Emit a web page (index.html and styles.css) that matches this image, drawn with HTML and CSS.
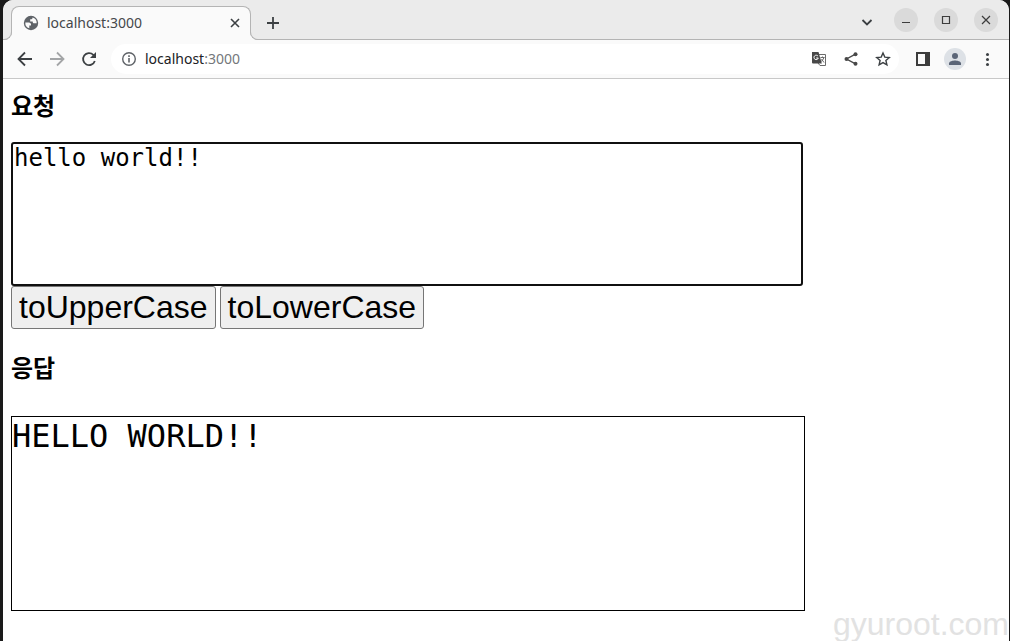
FILE: index.html
```html
<!DOCTYPE html>
<html lang="ko">
<head>
    <meta charset="UTF-8">
    <meta name="viewport" content="width=device-width, initial-scale=1.0">
    <title>localhost:3000</title>
    <link rel="stylesheet" href="styles.css">
</head>
<body>
    <div class="window">

        <!-- Tab strip -->
        <header class="tab-bar">
            <div class="tab">
                <svg class="icon" viewBox="0 0 16 16">
                    <circle cx="8" cy="8" r="7.200" fill="#5f6368"/>
                    <path d="M2.300 7.500h3.500c1.400 0 2.200.7 2.200 2v1H6.300v2.800A5.800 5.800 0 0 1 2.300 7.500zM9.500 2.500A5.800 5.800 0 0 1 13.700 8.300H11c-1 0-1.300-.8-1.300-1.800H7.200V4.200h1.300c.7 0 1-.7 1-1.700z" fill="#fafafa"/>
                </svg>
                <span class="tab-title">localhost:3000</span>
                <button class="icon-button" aria-label="Close tab">
                    <svg class="icon" viewBox="0 0 16 16"><path d="M4 4l8 8M12 4l-8 8" class="line"/></svg>
                </button>
            </div>
            <button class="icon-button new-tab" aria-label="New tab">
                <svg class="icon" viewBox="0 0 16 16"><path d="M8 2v12M2 8h12" class="line"/></svg>
            </button>
            <div class="window-controls">
                <button class="icon-button tab-search" aria-label="Search tabs">
                    <svg class="icon" viewBox="0 0 16 16"><path d="M3.500 6l4.500 4.500L12.500 6" class="line"/></svg>
                </button>
                <button class="round-button" aria-label="Minimize">
                    <svg class="icon" viewBox="0 0 16 16"><path d="M4 10.500h8" class="thin"/></svg>
                </button>
                <button class="round-button" aria-label="Maximize">
                    <svg class="icon" viewBox="0 0 16 16"><path d="M4.500 4.500h7v7h-7z" class="thin"/></svg>
                </button>
                <button class="round-button" aria-label="Close">
                    <svg class="icon" viewBox="0 0 16 16"><path d="M4 4l8 8M12 4l-8 8" class="thin"/></svg>
                </button>
            </div>
        </header>

        <!-- Toolbar -->
        <nav class="toolbar">
            <button class="icon-button" aria-label="Back">
                <svg class="icon" viewBox="0 0 16 16"><path d="M15 8H2M8 1.500L1.500 8 8 14.500" class="line"/></svg>
            </button>
            <button class="icon-button disabled" aria-label="Forward" disabled>
                <svg class="icon" viewBox="0 0 16 16"><path d="M1 8h13M8 1.500L14.500 8 8 14.500" class="line"/></svg>
            </button>
            <button class="icon-button" aria-label="Reload">
                <svg class="icon" viewBox="0 0 16 16">
                    <path d="M13.800 10A6 6 0 1 1 12.300 3.800L14 5.500" class="line"/>
                    <path d="M15 1v6H9z" fill="#3c4043"/>
                </svg>
            </button>
            <div class="address-bar">
                <svg class="icon" viewBox="0 0 16 16">
                    <circle cx="8" cy="8" r="6.300" fill="none" stroke="#5f6368" stroke-width="1.400"/>
                    <path d="M7.200 7h1.600v4.500H7.200zM7.200 4.300h1.600v1.600H7.200z" fill="#5f6368"/>
                </svg>
                <div class="url">localhost<span class="port">:3000</span></div>
                <button class="icon-button" aria-label="Translate">
                    <svg class="icon" viewBox="0 0 16 16">
                        <path d="M7 3.500h7.500v11H9L7 12" fill="#fff" stroke="#6b6b6b"/>
                        <path d="M1 1h6.500l3.300 11.500H2a1 1 0 0 1-1-1z" fill="#484848"/>
                        <path d="M7 5.200A2.200 2.200 0 1 0 7.300 7H5.200" fill="none" stroke="#fff"/>
                        <path d="M9.500 6.500h4M11.500 5.500v1M13 6.500c-.5 1.800-1.500 3-3 4M10.500 8l2.500 3.500" fill="none" stroke="#6b6b6b"/>
                    </svg>
                </button>
                <button class="icon-button" aria-label="Share">
                    <svg class="icon" viewBox="0 0 16 16">
                        <path d="M12.500 3.200L3.500 8l9 4.800" fill="none" stroke="#484848" stroke-width="1.400"/>
                        <g fill="#484848"><circle cx="12.500" cy="3.200" r="2"/><circle cx="3.500" cy="8" r="2"/><circle cx="12.500" cy="12.800" r="2"/></g>
                    </svg>
                </button>
                <button class="icon-button" aria-label="Bookmark">
                    <svg class="icon" viewBox="0 0 16 16"><path d="M8 2l1.800 4.100 4.500.4-3.400 3 1 4.400L8 11.600l-3.900 2.300 1-4.400-3.400-3 4.500-.4z" fill="none" stroke="#3c4043" stroke-width="1.400"/></svg>
                </button>
            </div>
            <div class="toolbar-actions">
                <button class="icon-button" aria-label="Side panel">
                    <svg class="icon" viewBox="0 0 16 16"><path d="M1 1h14v14H1zM3 3v10h7V3z" fill="#3c3c3c" fill-rule="evenodd"/></svg>
                </button>
                <button class="avatar" aria-label="Profile">
                    <svg class="icon" viewBox="0 0 16 16"><circle cx="8" cy="5" r="3" fill="#5b6577"/><path d="M2 14v-1.500C2 10.300 6 9.500 8 9.500s6 .8 6 3V14z" fill="#5b6577"/></svg>
                </button>
                <button class="icon-button" aria-label="Menu">
                    <svg class="icon" viewBox="0 0 16 16"><g fill="#3c4043"><circle cx="8.500" cy="3.500" r="1.500"/><circle cx="8.500" cy="8.500" r="1.500"/><circle cx="8.500" cy="13.500" r="1.500"/></g></svg>
                </button>
            </div>
        </nav>

        <!-- Page content -->
        <main class="page">
            <h3><label for="request">요청</label></h3>
            <textarea id="request" class="request" rows="5" spellcheck="false">hello world!!</textarea>
            <div class="buttons">
                <button class="case-button" onclick="convert('toUpperCase')">toUpperCase</button>
                <button class="case-button" onclick="convert('toLowerCase')">toLowerCase</button>
            </div>
            <h3 class="response-title">응답</h3>
            <pre id="response" class="response">HELLO WORLD!!</pre>
        </main>

        <div class="watermark">gyuroot.com</div>
    </div>

    <script>
        function convert(method) {
            const text = document.getElementById('request').value;
            document.getElementById('response').textContent = text[method]();
        }
    </script>
</body>
</html>
```
FILE: styles.css
```css
* {
    box-sizing: border-box;
}
body {
    margin: 0;
    background: #1a1a1a;
    font-family: "Noto Sans", "Noto Sans CJK KR", sans-serif;
}
button {
    font-family: inherit;
    padding: 0;
}
.window {
    position: relative;
    min-height: 100vh;
    margin: 0 1px 0 3px;
    background: #fff;
    border-radius: 10px 10px 0 0;
    overflow: hidden;
}
.icon {
    display: block;
    flex: none;
    width: 16px;
    height: 16px;
}
.line {
    fill: none;
    stroke: #3c4043;
    stroke-width: 1.8;
}
.thin {
    fill: none;
    stroke: #3c3c3c;
    stroke-width: 1.2;
}
.icon-button {
    flex: none;
    border: none;
    background: none;
}

/* Tab strip */
.tab-bar {
    display: flex;
    align-items: flex-end;
    height: 40px;
    padding: 0 11px 0 8px;
    background: #ebebeb;
    border-bottom: 1px solid #b4b4b4;
}
.tab {
    position: relative;
    display: flex;
    align-items: center;
    gap: 8px;
    width: 240px;
    height: 34px;
    margin-bottom: -1px;
    padding: 0 7px 2px 11px;
    background: #fafafa;
    border: 1px solid #b4b4b4;
    border-bottom: none;
    border-radius: 8px 8px 0 0;
}
.tab::before,
.tab::after {
    content: "";
    position: absolute;
    bottom: 0;
    box-sizing: border-box;
    width: 9px;
    height: 9px;
    border-bottom: 1px solid #b4b4b4;
    box-shadow: 0 0 0 4px #fafafa;
    clip-path: inset(0);
}
.tab::before {
    left: -9px;
    border-right: 1px solid #b4b4b4;
    border-bottom-right-radius: 8px;
}
.tab::after {
    right: -9px;
    border-left: 1px solid #b4b4b4;
    border-bottom-left-radius: 8px;
}
.tab-title {
    flex: 1;
    font-size: 14px;
    color: #45484b;
}
.tab .line {
    stroke-width: 1.6;
}
.new-tab {
    margin: 0 0 8px 14px;
}
.window-controls {
    display: flex;
    align-items: center;
    gap: 16px;
    height: 39px;
    margin-left: auto;
    padding-top: 1px;
}
.tab-search {
    margin: 4px 3px 0 0;
}
.round-button {
    display: flex;
    align-items: center;
    justify-content: center;
    width: 24px;
    height: 24px;
    border: none;
    border-radius: 50%;
    background: #dadada;
}

/* Toolbar */
.toolbar {
    display: flex;
    align-items: center;
    gap: 16px;
    height: 39px;
    padding: 0 14px;
    background: #fafafa;
    border-bottom: 1px solid #c8c8c8;
}
.disabled {
    opacity: 0.45;
}
.address-bar {
    flex: 1;
    display: flex;
    align-items: center;
    gap: 16px;
    height: 30px;
    margin-left: -2px;
    padding: 0 8px 0 10px;
    background: #fff;
    border-radius: 15px;
}
.url {
    flex: 1;
    margin-left: -8px;
    padding-bottom: 2px;
    font-size: 14px;
    color: #202124;
}
.port {
    color: #74777b;
}
.toolbar-actions {
    display: flex;
    align-items: center;
    gap: 13px;
}
.avatar {
    display: flex;
    align-items: center;
    justify-content: center;
    width: 22px;
    height: 22px;
    border: none;
    border-radius: 50%;
    background: #dde1e6;
}

/* Page content */
.page {
    padding: 8px;
}
h3 {
    margin: 0 0 19px;
    font-family: "Noto Sans CJK KR", sans-serif;
    font-size: 24px;
    line-height: 36px;
}
.request {
    display: block;
    width: 80%;
    padding: 0 1px;
    border: 2px solid #101010;
    border-radius: 3px;
    outline: none;
    resize: none;
    font-family: "DejaVu Sans Mono", monospace;
    font-size: 24px;
    line-height: 28px;
}
.buttons {
    display: flex;
    gap: 4px;
}
.case-button {
    padding: 2px 7px;
    border: 1px solid #767676;
    border-radius: 3px;
    background: #efefef;
    color: #000;
    font-family: "Liberation Sans", sans-serif;
    font-size: 32px;
    line-height: 37px;
}
.response-title {
    margin: 20px 0 31px;
}
.response {
    box-sizing: content-box;
    width: 80%;
    min-height: 193px;
    margin: 0;
    border: 1px solid #000;
    font-family: "DejaVu Sans Mono", monospace;
    font-size: 32px;
    line-height: 38px;
    white-space: pre-wrap;
}
.watermark {
    position: absolute;
    right: 0;
    bottom: 0;
    font-family: "Liberation Sans", sans-serif;
    font-size: 32px;
    line-height: 34px;
    color: #e2e2e2;
}
```
